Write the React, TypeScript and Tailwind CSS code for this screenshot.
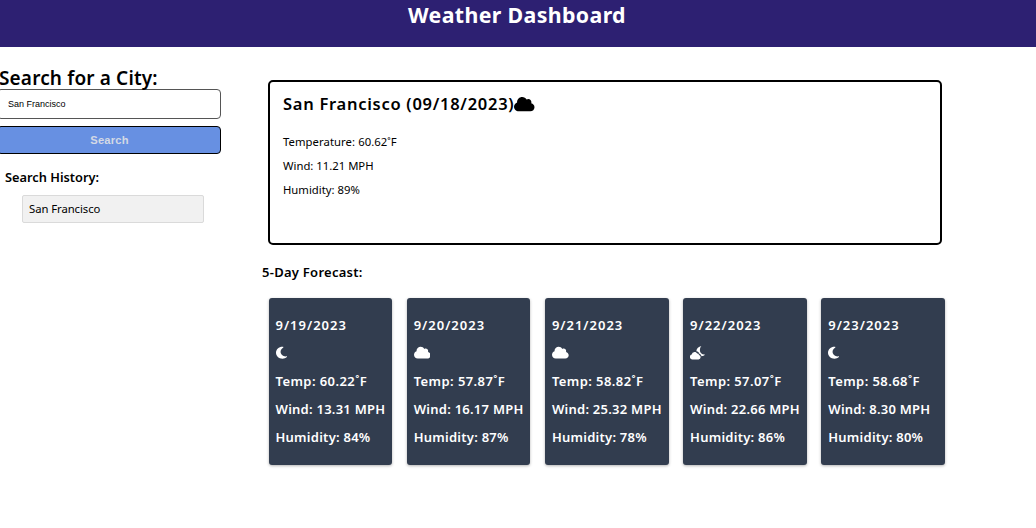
import { FaCloud, FaMoon } from "react-icons/fa6";

function CloudMoon({ className }: { className?: string; preserveAspectRatio?: string }) {
  return (
    <svg viewBox="0 0 15 13.4" className={className} fill="currentColor" aria-hidden="true">
      <path d="M11.4 0C8.6.5 6.6 2.6 6.3 5.2c1.7.3 2.9 1.4 3.2 2.9 1.100.4 1.800 1.100 2 2.100 1.500-.1 2.800-.8 3.500-1.800C12 8.700 9.900 6.900 9.900 4.200 9.900 2.500 10.500 1 11.400 0z" />
      <path d="M2.500 13.400A2.500 2.500 0 0 1 1.700 8.500 2.900 2.900 0 0 1 4.600 6C5.800 6 6.800 6.600 7.200 7.600A1.700 1.700 0 0 1 9 9 2.250 2.250 0 0 1 8.600 13.400z" />
    </svg>
  );
}

const days = [
  { date: "9/19/2023", Icon: FaMoon, size: "h-[13.6px] w-[11px]", temp: "60.22", wind: "13.31", humidity: 84 },
  { date: "9/20/2023", Icon: FaCloud, size: "h-[13.4px] w-[16.7px]", temp: "57.87", wind: "16.17", humidity: 87 },
  { date: "9/21/2023", Icon: FaCloud, size: "h-[13.4px] w-[16.7px]", temp: "58.82", wind: "25.32", humidity: 78 },
  { date: "9/22/2023", Icon: CloudMoon, size: "h-[13.4px] w-[15px]", temp: "57.07", wind: "22.66", humidity: 86 },
  { date: "9/23/2023", Icon: FaMoon, size: "h-[13.6px] w-[11px]", temp: "58.68", wind: "8.30", humidity: 80 },
];

export default function App() {
  return (
    <div className="h-[528px] w-[1036px] overflow-hidden bg-white font-['Noto_Sans',sans-serif] text-black whitespace-nowrap">
      <header className="flex h-[47px] justify-center bg-[#2d2072] pr-[2px]">
        <h1 className="h-[30px] text-[21.3px] leading-[30px] font-bold tracking-[0.38px] text-white">
          <span>Weather Dashboard</span>
        </h1>
      </header>
      <div className="flex">
        <aside className="w-[262px] shrink-0 pt-[18px]">
          <h2 className="-ml-[1px] h-[24px] text-[19px] leading-[27px] font-semibold tracking-[0.15px]">
            <span>Search for a City:</span>
          </h2>
          <input
            className="-ml-[3px] block h-[30px] w-[224px] rounded-[4px] border border-[#555] bg-white pl-[10px] font-['Liberation_Sans',sans-serif] text-[9px] outline-none"
            defaultValue="San Francisco"
          />
          <button className="mt-[7px] -ml-[3px] block h-[28px] w-[224px] rounded-[4px] border border-black bg-[#6790e2] pl-[1px] font-['Liberation_Sans',sans-serif] text-[11.2px] leading-[26px] font-bold tracking-[0.2px] text-[#d3d9e5]">
            <span>Search</span>
          </button>
          <h3 className="mt-[13px] ml-[5px] h-[20px] text-[12.8px] leading-[20px] font-semibold">
            <span>Search History:</span>
          </h3>
          <ul className="mt-[8px] ml-[22px]">
            <li className="h-[28px] w-[182px] rounded-[2px] border border-[#dadada] bg-[#f1f1f1] pl-[6px] text-[11.3px] leading-[26px] tracking-[-0.06px]">
              <span>San Francisco</span>
            </li>
          </ul>
        </aside>
        <main className="w-[690px] pt-[33px]">
          <section className="ml-[6px] h-[165px] w-[674px] rounded-[5px] border-2 border-black pt-[10px] pl-[13px]">
            <h2 className="flex h-[24px] items-center text-[16.5px] leading-[24px] font-semibold">
              <span className="tracking-[0.72px]">San Francisco (09/18/2023)</span>
              <FaCloud className="h-[16.4px] w-[20.5px]" />
            </h2>
            <div className="mt-[14px] text-[11.3px] leading-[23.8px]">
              <p className="tracking-[0.06px]"><span>Temperature: 60.62˚F</span></p>
              <p><span>Wind: 11.21 MPH</span></p>
              <p><span>Humidity: 89%</span></p>
            </div>
          </section>
          <h3 className="mt-[17px] h-[20px] text-[13px] leading-[20px] font-semibold tracking-[0.27px]">
            <span>5-Day Forecast:</span>
          </h3>
          <div className="mt-[16px] ml-[6.5px] flex gap-[14.4px]">
            {days.map(({ date, Icon, size, temp, wind, humidity }) => (
              <article
                key={date}
                className="h-[166.5px] w-[123.8px] shrink-0 rounded-[3px] bg-[#323d4f] pt-[13px] pl-[7px] text-[13px] leading-[28px] font-semibold text-white shadow-[0_1px_3px_rgba(0,0,0,0.3)]"
              >
                <p className="tracking-[1px]"><span>{date}</span></p>
                <div className="flex h-[28px] items-center">
                  <Icon preserveAspectRatio="none" className={size} />
                </div>
                <p className="tracking-[0.42px]"><span>Temp: {temp}˚F</span></p>
                <p className="tracking-[0.25px]"><span>Wind: {wind} MPH</span></p>
                <p className="tracking-[0.25px]"><span>Humidity: {humidity}%</span></p>
              </article>
            ))}
          </div>
        </main>
      </div>
    </div>
  );
}
